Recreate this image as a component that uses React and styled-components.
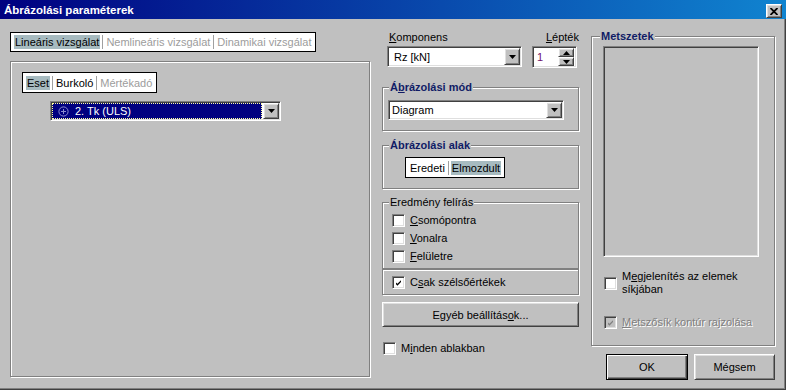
import React from "react";
import styled, { createGlobalStyle, css } from "styled-components";

const GlobalStyle = createGlobalStyle`
  html, body {
    margin: 0;
    padding: 0;
    background: #c0c0c0;
  }
  body {
    font-family: "Liberation Sans", Arial, sans-serif;
    font-size: 11px;
    color: #000;
  }
  * {
    box-sizing: border-box;
  }
`;

const sunken = css`
  border: 1px solid;
  border-color: #808080 #fff #fff #808080;
  box-shadow: inset 1px 1px 0 #404040, inset -1px -1px 0 #dfdfdf;
  padding: 1px;
`;

const raised = css`
  border: 1px solid;
  border-color: #fff #404040 #404040 #fff;
  box-shadow: inset 1px 1px 0 #dfdfdf, inset -1px -1px 0 #808080;
  background: #c0c0c0;
`;

const etched = css`
  border: 1px solid #808080;
  box-shadow: inset 1px 1px 0 #fff, 1px 1px 0 #fff;
`;

const Window = styled.div`
  width: 786px;
  height: 390px;
  display: flex;
  flex-direction: column;
  background: #c0c0c0;
`;

const TitleBar = styled.div`
  height: 19px;
  display: flex;
  justify-content: space-between;
  align-items: flex-start;
  padding: 0 4px 0 4px;
  background: linear-gradient(to right, #000080, #1084d0);
`;

const Title = styled.span`
  color: #fff;
  font-weight: bold;
  font-size: 11.5px;
  line-height: 19px;
  padding-top: 1px;
`;

const CloseBtn = styled.div`
  ${raised};
  width: 16px;
  height: 14px;
  margin-top: 4px;
  display: flex;
  align-items: center;
  justify-content: center;
`;

const Body = styled.div`
  flex: 1;
  display: flex;
  border-right: 1px solid #404040;
  border-bottom: 1px solid #404040;
  box-shadow: inset -1px -1px 0 #808080;
`;

const LeftCol = styled.div`
  width: 361px;
  margin-left: 10px;
  padding-top: 13px;
  display: flex;
  flex-direction: column;
  align-items: flex-start;
`;

const TabStrip = styled.div`
  display: inline-flex;
  align-items: center;
  height: ${(p) => p.$h || 20}px;
  padding: 0 3px;
  background: #fff;
  border: 1px solid #000;
`;

const Tab = styled.span`
  height: 14px;
  line-height: 14px;
  padding: 0 1px;
  white-space: nowrap;
  background: ${(p) => (p.$active ? "#a7bbc0" : "transparent")};
  color: ${(p) => (p.$disabled ? "#9c9c9c" : "#000")};
`;

const TabSep = styled.span`
  width: 1px;
  height: 14px;
  margin: 0 2px;
  background: #a0a0a0;
`;

const LeftFrame = styled.div`
  ${etched};
  width: 360px;
  height: 316px;
  margin-top: 9px;
  padding: 10px 0 0 11px;
`;

const Combo = styled.div`
  ${sunken};
  display: flex;
  width: ${(p) => p.$w}px;
  height: ${(p) => p.$h || 20}px;
  background: #fff;
  margin: ${(p) => p.$m || "0"};
`;

const Field = styled.div`
  flex: 1;
  display: flex;
  align-items: center;
  gap: 6px;
  padding-left: ${(p) => p.$pad ?? 2}px;
  margin-right: ${(p) => (p.$selected ? 1 : 0)}px;
  background: ${(p) => (p.$selected ? "#000080" : "#fff")};
  color: ${(p) => (p.$selected ? "#fff" : p.$color || "#000")};
  outline: ${(p) => (p.$selected ? "1px dotted #ffffa0" : "none")};
  outline-offset: -1px;
  white-space: nowrap;
`;

const DropBtn = styled.div`
  ${raised};
  width: 16px;
  display: flex;
  align-items: center;
  justify-content: center;
`;

const SpinBtns = styled.div`
  width: 16px;
  display: flex;
  flex-direction: column;
  margin-right: 1px;
`;

const SpinBtn = styled(DropBtn)`
  flex: 1;
  width: 100%;
`;

const MiddleCol = styled.div`
  width: 197px;
  margin-left: 11px;
  padding-top: 12px;
  display: flex;
  flex-direction: column;
`;

const LabelRow = styled.div`
  display: flex;
  justify-content: space-between;
  height: 13px;
  line-height: 13px;
  padding-left: 7px;
`;

const ComboRow = styled.div`
  display: flex;
  align-items: flex-start;
  margin-top: 2px;
`;

const Group = styled.fieldset`
  ${etched};
  margin: ${(p) => p.$mt || 0}px 0 0 0;
  padding: 0;
  min-width: 0;
  width: ${(p) => p.$w || 197}px;
`;

const Legend = styled.legend`
  padding: 0 1px;
  margin-left: ${(p) => p.$ml || 6}px;
  line-height: 13px;
  background: #c0c0c0;
  font-weight: ${(p) => (p.$plain ? "normal" : "bold")};
  color: ${(p) => (p.$plain ? "#000" : "#101c66")};
`;

const GroupInner = styled.div`
  padding: ${(p) => p.$pad};
  display: flex;
  flex-direction: column;
  align-items: flex-start;
`;

const EtchedBox = styled.div`
  ${etched};
  height: 26px;
  padding: 3px 0 0 9px;
`;

const CheckRow = styled.label`
  display: flex;
  align-items: center;
  gap: 5px;
  height: ${(p) => p.$h || 18}px;
  line-height: 13px;
  margin: ${(p) => p.$m || "0"};
  color: ${(p) => (p.$disabled ? "#808080" : "#000")};
  text-shadow: ${(p) => (p.$disabled ? "1px 1px 0 #fff" : "none")};
`;

const Box = styled.span`
  ${sunken};
  width: 13px;
  height: 13px;
  flex: none;
  padding: 2px;
  display: flex;
  background: ${(p) => (p.$disabled ? "#c0c0c0" : "#fff")};
`;

const Button = styled.div`
  ${raised};
  width: ${(p) => p.$w}px;
  height: ${(p) => p.$h || 26}px;
  margin: ${(p) => p.$m || "0"};
  display: flex;
  align-items: center;
  justify-content: center;
  ${(p) =>
    p.$default &&
    css`
      border-color: #000;
      box-shadow: inset 1px 1px 0 #fff, inset -1px -1px 0 #404040,
        inset -2px -2px 0 #808080;
    `}
`;

const RightCol = styled.div`
  margin-left: 12px;
  padding-top: 11px;
  display: flex;
  flex-direction: column;
`;

const ListBox = styled.div`
  ${sunken};
  width: 156px;
  height: 211px;
  background: #c0c0c0;
`;

const ButtonRow = styled.div`
  display: flex;
  gap: 6px;
  margin-top: 8px;
  padding-left: 15px;
`;

const Arrow = ({ up }) => (
  <svg width="7" height="4" viewBox="0 0 7 4">
    <polygon points={up ? "3.5,0 7,4 0,4" : "0,0 7,0 3.5,4"} fill="#000" />
  </svg>
);

const Check = ({ color }) => (
  <svg width="7" height="7" viewBox="0 0 7 7" style={{ margin: "1px" }}>
    <polygon points="0,2 2,4 7,-1 7,1.5 2,6.5 0,4.5" fill={color} />
  </svg>
);

const CheckBox = ({ checked, disabled, children, ...rest }) => (
  <CheckRow $disabled={disabled} {...rest}>
    <Box $disabled={disabled}>
      {checked && <Check color={disabled ? "#808080" : "#000"} />}
    </Box>
    <span>{children}</span>
  </CheckRow>
);

export default function App() {
  return (
    <>
      <GlobalStyle />
      <Window>
        <TitleBar>
          <Title>Ábrázolási paraméterek</Title>
          <CloseBtn>
            <svg width="8" height="7" viewBox="0 0 8 7">
              <path d="M0.5 0 L7.5 7 M7.5 0 L0.5 7" stroke="#000" strokeWidth="1.8" />
            </svg>
          </CloseBtn>
        </TitleBar>
        <Body>
          <LeftCol>
            <TabStrip>
              <Tab $active>Lineáris vizsgálat</Tab>
              <TabSep />
              <Tab $disabled>Nemlineáris vizsgálat</Tab>
              <TabSep />
              <Tab $disabled>Dinamikai vizsgálat</Tab>
            </TabStrip>
            <LeftFrame>
              <TabStrip $h={21}>
                <Tab $active>Eset</Tab>
                <TabSep />
                <Tab>Burkoló</Tab>
                <TabSep />
                <Tab $disabled>Mértékadó</Tab>
              </TabStrip>
              <Combo $w={231} $m="8px 0 0 28px">
                <Field $selected $pad={6}>
                  <svg width="11" height="11" viewBox="0 0 11 11">
                    <circle cx="5.5" cy="5.5" r="4.6" fill="none" stroke="#8c8cd0" />
                    <path d="M5.5 3 V8 M3 5.5 H8" stroke="#8c8cd0" />
                  </svg>
                  <span>2. Tk (ULS)</span>
                </Field>
                <DropBtn>
                  <Arrow />
                </DropBtn>
              </Combo>
            </LeftFrame>
          </LeftCol>

          <MiddleCol>
            <LabelRow>
              <span>
                <u>K</u>omponens
              </span>
              <span>
                <u>L</u>épték
              </span>
            </LabelRow>
            <ComboRow>
              <Combo $w={135} $h={21} $m="0 0 0 5px">
                <Field $pad={5}>Rz [kN]</Field>
                <DropBtn>
                  <Arrow />
                </DropBtn>
              </Combo>
              <Combo $w={45} $h={22} $m="0 0 0 10px">
                <Field $pad={3} $color="#70106a">
                  1
                </Field>
                <SpinBtns>
                  <SpinBtn>
                    <Arrow up />
                  </SpinBtn>
                  <SpinBtn>
                    <Arrow />
                  </SpinBtn>
                </SpinBtns>
              </Combo>
            </ComboRow>

            <Group $mt={13}>
              <Legend>
                Á<u>b</u>rázolási mód
              </Legend>
              <GroupInner $pad="6px 0 10px 5px">
                <Combo $w={176}>
                  <Field $pad={2}>Diagram</Field>
                  <DropBtn>
                    <Arrow />
                  </DropBtn>
                </Combo>
              </GroupInner>
            </Group>

            <Group $mt={8}>
              <Legend>Ábrázolási alak</Legend>
              <GroupInner $pad="5px 0 10px 22px">
                <TabStrip $h={21}>
                  <Tab>Eredeti</Tab>
                  <TabSep />
                  <Tab $active>Elmozdult</Tab>
                </TabStrip>
              </GroupInner>
            </Group>

            <Group $mt={7}>
              <Legend $plain>Eredmény felírás</Legend>
              <GroupInner $pad="2px 0 3px 9px">
                <CheckBox>
                  <u>C</u>somópontra
                </CheckBox>
                <CheckBox>
                  <u>V</u>onalra
                </CheckBox>
                <CheckBox>
                  <u>F</u>elületre
                </CheckBox>
              </GroupInner>
            </Group>
            <EtchedBox>
              <CheckBox checked>
                C<u>s</u>ak szélsőértékek
              </CheckBox>
            </EtchedBox>

            <Button $w={197} $h={25} $m="7px 0 0 0">
              Egyéb beállítás<u>o</u>k...
            </Button>

            <CheckBox $m="12px 0 0 1px">
              M<u>i</u>nden ablakban
            </CheckBox>
          </MiddleCol>

          <RightCol>
            <Group $w={184}>
              <Legend $ml={8}>Metszetek</Legend>
              <GroupInner $pad="3px 0 14px 11px">
                <ListBox />
                <CheckBox $h={26} $m="13px 0 0 1px">
                  M<u>e</u>gjelenítés az elemek
                  <br />
                  síkjában
                </CheckBox>
                <CheckBox checked disabled $m="17px 0 0 1px">
                  <u>M</u>etszősík kontúr rajzolása
                </CheckBox>
              </GroupInner>
            </Group>
            <ButtonRow>
              <Button $w={82} $default>
                OK
              </Button>
              <Button $w={81}>Mégsem</Button>
            </ButtonRow>
          </RightCol>
        </Body>
      </Window>
    </>
  );
}
